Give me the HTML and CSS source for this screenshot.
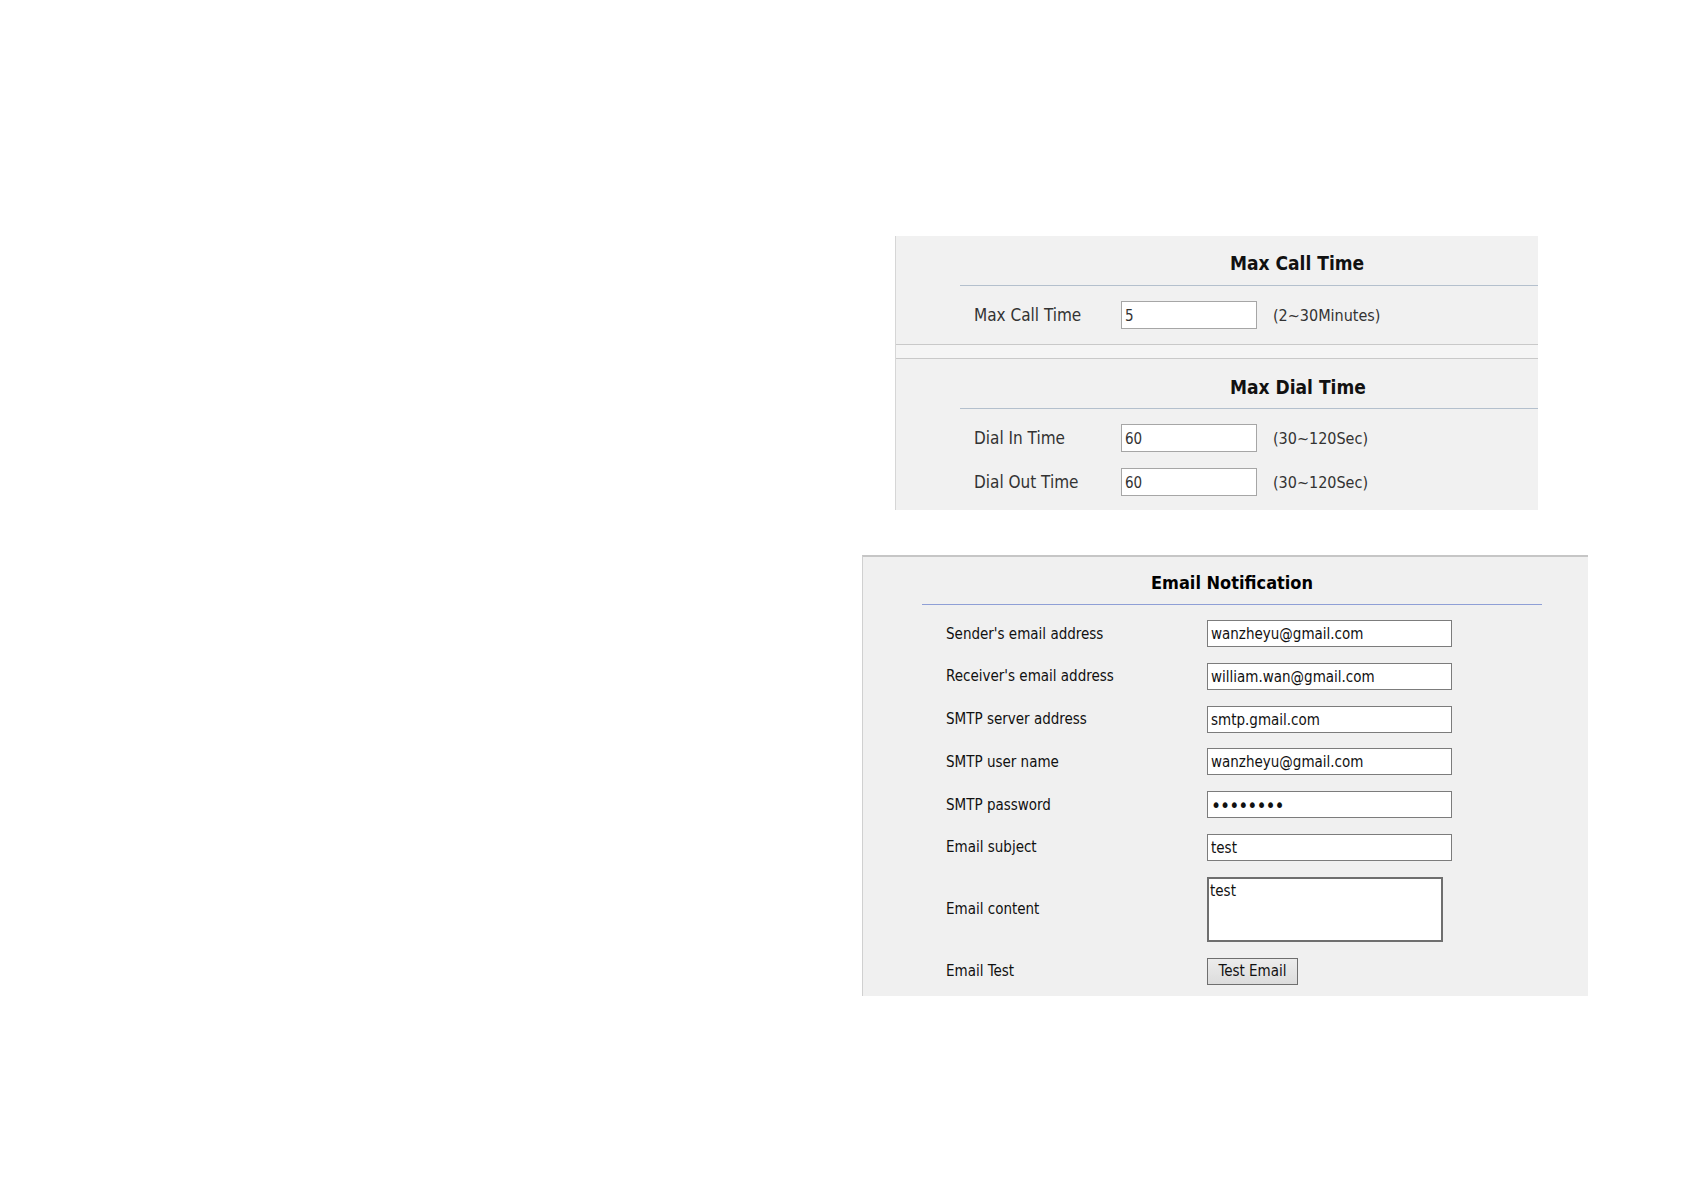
FILE: index.html
```html
<!DOCTYPE html>
<html lang="en">
<head>
<meta charset="utf-8">
<title>Call and Email Settings</title>
<link rel="stylesheet" href="styles.css">
</head>
<body>
<div class="page">
  <div class="time-group">
    <section class="tsec tsec-call">
      <h2 class="tsec-head">Max Call Time</h2>
      <div class="trow">
        <span class="tlabel">Max Call Time</span>
        <input class="tinput" type="text" value="5">
        <span class="thint">(2~30Minutes)</span>
      </div>
    </section>
    <div class="tstrip"></div>
    <section class="tsec tsec-dial">
      <h2 class="tsec-head">Max Dial Time</h2>
      <div class="trows">
        <div class="trow">
          <span class="tlabel">Dial In Time</span>
          <input class="tinput" type="text" value="60">
          <span class="thint">(30~120Sec)</span>
        </div>
        <div class="trow">
          <span class="tlabel">Dial Out Time</span>
          <input class="tinput" type="text" value="60">
          <span class="thint">(30~120Sec)</span>
        </div>
      </div>
    </section>
  </div>

  <section class="email">
    <h2 class="email-head">Email Notification</h2>
    <div class="erows">
      <div class="erow"><span class="elabel">Sender's email address</span><input class="einput" type="text" value="wanzheyu@gmail.com"></div>
      <div class="erow"><span class="elabel">Receiver's email address</span><input class="einput" type="text" value="william.wan@gmail.com"></div>
      <div class="erow"><span class="elabel">SMTP server address</span><input class="einput" type="text" value="smtp.gmail.com"></div>
      <div class="erow"><span class="elabel">SMTP user name</span><input class="einput" type="text" value="wanzheyu@gmail.com"></div>
      <div class="erow"><span class="elabel">SMTP password</span><input class="einput epass" type="password" value="12345678"></div>
      <div class="erow"><span class="elabel">Email subject</span><input class="einput" type="text" value="test"></div>
      <div class="erow erow-area"><span class="elabel">Email content</span><textarea class="earea">test</textarea></div>
      <div class="erow erow-btn"><span class="elabel">Email Test</span><button class="ebtn" type="button">Test Email</button></div>
    </div>
  </section>
</div>
</body>
</html>
```
FILE: styles.css
```css
html, body {
  margin: 0;
  padding: 0;
  background: #ffffff;
}

body {
  font-family: "DejaVu Sans Condensed", "DejaVu Sans", sans-serif;
  color: #222;
}

.page {
  padding: 236px 0 0 862px;
  display: flex;
  flex-direction: column;
  align-items: flex-start;
}

/* ---------- Max call / dial time ---------- */
.time-group {
  margin-left: 33px;
  width: 642px;
  border-left: 1px solid #d6d6d6;
  background: #f1f1f1;
}

.tsec {
  background: #f1f1f1;
}

.tsec-call {
  padding: 15px 0 15px;
  border-bottom: 1px solid #c9c9c9;
}

.tstrip {
  height: 13px;
  background: #f5f5f5;
}

.tsec-dial {
  border-top: 1px solid #c9c9c9;
  padding: 16px 0 14px;
}

.tsec-head {
  margin: 0 0 0 64px;
  padding: 0 0 10px 270px;
  border-bottom: 1px solid #b4c0cd;
  font-size: 19px;
  line-height: 24px;
  font-weight: bold;
  color: #111;
}

.tsec-dial .tsec-head {
  padding-bottom: 9px;
}

.trows {
  display: flex;
  flex-direction: column;
  gap: 16px;
  margin-top: 15px;
}

.trow {
  display: flex;
  align-items: center;
  padding-left: 78px;
  margin-top: 15px;
}

.trows .trow {
  margin-top: 0;
}

.tlabel {
  width: 147px;
  font-size: 17px;
  color: #333;
}

.tinput {
  box-sizing: border-box;
  width: 136px;
  height: 28px;
  margin: 0;
  padding: 1px 3px 0;
  border: 1px solid #a6a6a6;
  background: #fff;
  font-family: inherit;
  font-size: 15px;
  color: #333;
  outline: none;
}

.thint {
  margin-left: 16px;
  font-size: 16px;
  color: #333;
}

/* ---------- Email notification ---------- */
.email {
  margin-top: 45px;
  box-sizing: border-box;
  width: 726px;
  border-top: 2px solid #c6c6c6;
  border-left: 1px solid #d0d0d0;
  background: #f0f0f0;
  padding: 13px 0 11px;
}

.email-head {
  margin: 0 0 0 59px;
  width: 620px;
  padding-bottom: 8px;
  border-bottom: 1px solid #8f9fd6;
  text-align: center;
  font-size: 18px;
  line-height: 26px;
  font-weight: bold;
  color: #000;
}

.erows {
  margin-top: 15px;
  display: flex;
  flex-direction: column;
  gap: 15.8px;
}

.erow {
  display: flex;
  align-items: center;
  padding-left: 83px;
}

.elabel {
  width: 261px;
  font-size: 15px;
  color: #111;
}

.einput {
  box-sizing: border-box;
  width: 245px;
  height: 27px;
  margin: 0;
  padding: 1px 3px 0;
  border: 1px solid #7c7c7c;
  background: #fff;
  font-family: inherit;
  font-size: 15px;
  color: #111;
  outline: none;
}

.epass {
  font-size: 19px;
  padding-top: 0;
  letter-spacing: -1px;
}

.earea {
  box-sizing: border-box;
  width: 236px;
  height: 65px;
  margin: 0;
  padding: 3px 1px 1px;
  border: 2px solid #6f6f6f;
  background: #fff;
  font-family: inherit;
  font-size: 15px;
  line-height: 18px;
  color: #111;
  resize: none;
  outline: none;
}

.ebtn {
  box-sizing: border-box;
  width: 91px;
  height: 27px;
  margin: 0;
  padding: 0;
  border: 1px solid #6f6f6f;
  background: linear-gradient(#ececec, #dcdcdc);
  font-family: inherit;
  font-size: 15px;
  color: #111;
}
```
